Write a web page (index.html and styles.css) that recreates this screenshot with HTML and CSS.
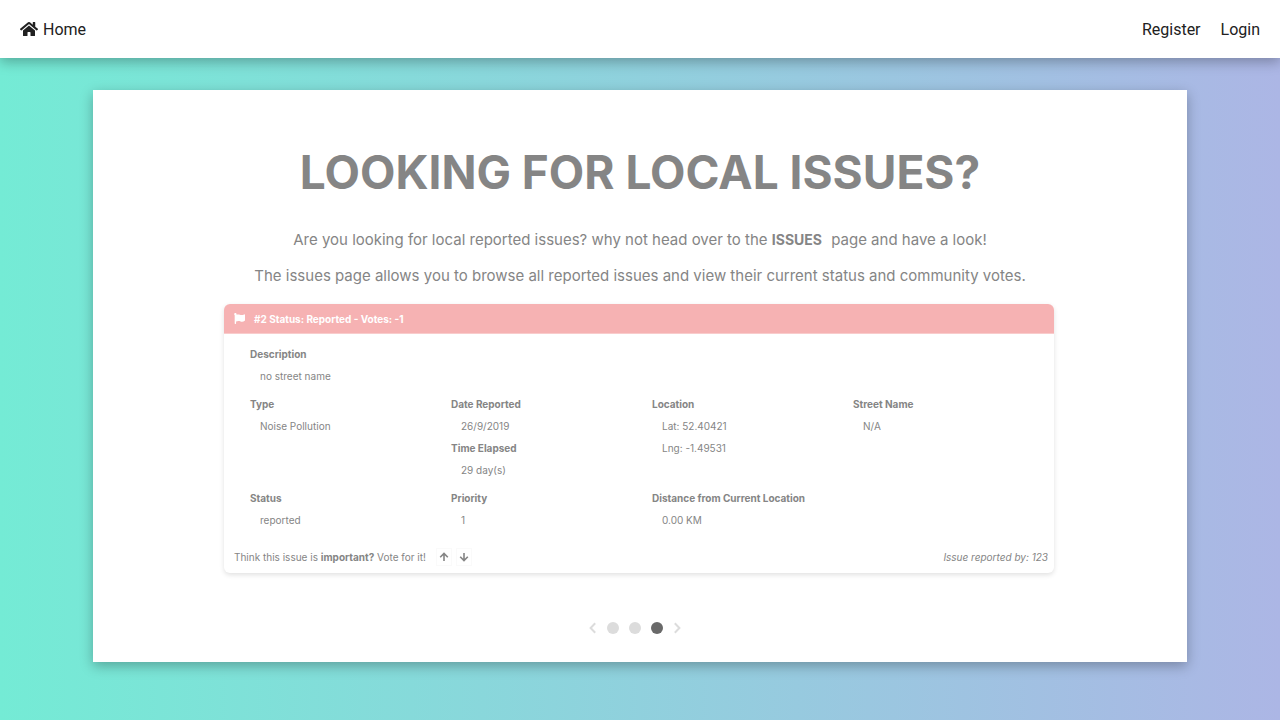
FILE: index.html
```html
<!DOCTYPE html>
<html lang="en">
<head>
<meta charset="utf-8">
<title>Local Issues</title>
<link rel="stylesheet" href="styles.css">
</head>
<body>
<nav class="navbar">
  <a class="nav-link" href="#">
    <svg class="home-icon" viewBox="0 0 576 512" aria-hidden="true"><path d="M280.37 148.26L96 300.11V464a16 16 0 0 0 16 16l112.06-.29a16 16 0 0 0 15.92-16V368a16 16 0 0 1 16-16h64a16 16 0 0 1 16 16v95.64a16 16 0 0 0 16 16.05L464 480a16 16 0 0 0 16-16V300L295.67 148.26a12.19 12.19 0 0 0-15.3 0zM571.6 251.47L488 182.56V44.05a12 12 0 0 0-12-12h-56a12 12 0 0 0-12 12v72.61L318.47 43a48 48 0 0 0-61 0L4.34 251.47a12 12 0 0 0-1.6 16.9l25.5 31A12 12 0 0 0 45.15 301l235.22-193.74a12.19 12.19 0 0 1 15.3 0L530.9 301a12 12 0 0 0 16.9-1.6l25.5-31a12 12 0 0 0-1.7-16.93z"/></svg>
    Home
  </a>
  <div class="nav-right">
    <a class="nav-link" href="#">Register</a>
    <a class="nav-link" href="#">Login</a>
  </div>
</nav>
<main class="panel">
  <h1 class="title">LOOKING FOR LOCAL ISSUES?</h1>
  <p class="lead">Are you looking for local reported issues? why not head over to the <a class="issues-link" href="#">ISSUES</a> page and have a look!</p>
  <p class="lead">The issues page allows you to browse all reported issues and view their current status and community votes.</p>
  <article class="card">
    <header class="card-header">
      <svg class="flag-icon" viewBox="0 0 512 512" aria-hidden="true"><path d="M349.565 98.783C295.978 98.783 251.721 64 184.348 64c-24.955 0-47.309 4.384-68.045 12.013a55.947 55.947 0 0 0 3.586-23.562C118.117 24.015 94.806 1.206 66.338.048 34.345-1.254 8 24.296 8 56c0 19.026 9.497 35.825 24 45.945V488c0 13.255 10.745 24 24 24h16c13.255 0 24-10.745 24-24v-94.4c28.311-12.064 63.582-22.122 114.435-22.122 53.588 0 97.844 34.783 165.217 34.783 48.169 0 86.667-16.294 122.505-40.858C506.84 359.452 512 349.571 512 339.045v-243.1c0-23.393-24.269-38.87-45.485-29.016-34.338 15.948-76.454 31.854-116.95 31.854z"/></svg>
      <span>#2 Status: Reported - Votes: -1</span>
    </header>
    <div class="card-body">
      <dl class="field wide"><dt>Description</dt><dd>no street name</dd></dl>
      <dl class="field"><dt>Type</dt><dd>Noise Pollution</dd></dl>
      <dl class="field"><dt>Date Reported</dt><dd>26/9/2019</dd><dt>Time Elapsed</dt><dd>29 day(s)</dd></dl>
      <dl class="field"><dt>Location</dt><dd>Lat: 52.40421</dd><dd>Lng: -1.49531</dd></dl>
      <dl class="field"><dt>Street Name</dt><dd>N/A</dd></dl>
      <dl class="field"><dt>Status</dt><dd>reported</dd></dl>
      <dl class="field"><dt>Priority</dt><dd>1</dd></dl>
      <dl class="field"><dt>Distance from Current Location</dt><dd>0.00 KM</dd></dl>
    </div>
    <footer class="card-footer">
      <span>Think this issue is <b>important?</b> Vote for it!</span>
      <div class="votes">
        <button class="vote" type="button" aria-label="Vote up"><svg class="arrow" viewBox="0 0 10 10"><path d="M5 9V1.5M1.2 5.2L5 1.4l3.8 3.8"/></svg></button>
        <button class="vote" type="button" aria-label="Vote down"><svg class="arrow" viewBox="0 0 10 10"><path d="M5 1v7.5M1.2 4.8L5 8.6l3.8-3.8"/></svg></button>
      </div>
      <em class="reporter">Issue reported by: 123</em>
    </footer>
  </article>
  <div class="pager">
    <button class="step" type="button" aria-label="Previous"><svg class="chevron" viewBox="0 0 8 12"><path d="M6.2 1.2L1.6 6l4.6 4.8"/></svg></button>
    <button class="dot" type="button" aria-label="Slide 1"></button>
    <button class="dot" type="button" aria-label="Slide 2"></button>
    <button class="dot active" type="button" aria-label="Slide 3"></button>
    <button class="step" type="button" aria-label="Next"><svg class="chevron" viewBox="0 0 8 12"><path d="M1.8 1.2L6.4 6l-4.6 4.8"/></svg></button>
  </div>
</main>
</body>
</html>
```

FILE: styles.css
```css
* { box-sizing: border-box; }
body {
  margin: 0;
  min-height: 100vh;
  background: linear-gradient(to right, #74ebd5, #acb6e5);
  font-family: Inter, sans-serif;
  font-size: 15px;
  color: #858585;
}
button { border: 0; padding: 0; background: none; color: inherit; cursor: pointer; }
.navbar {
  display: flex;
  justify-content: space-between;
  align-items: center;
  height: 58px;
  padding: 0 20px;
  background: #fff;
  box-shadow: 0 4px 12px rgba(0, 0, 0, .28);
}
.nav-right { display: flex; gap: 20px; }
.nav-link {
  display: flex;
  align-items: center;
  gap: 5px;
  font-family: Roboto, sans-serif;
  font-size: 16px;
  color: #212121;
  text-decoration: none;
}
.home-icon { width: 18px; height: 16px; fill: currentColor; }
.panel {
  display: flex;
  flex-direction: column;
  align-items: center;
  margin: 32px 93px 58px;
  padding: 52px 32px 28px;
  background: #fff;
  box-shadow: 0 4px 12px rgba(0, 0, 0, .28);
}
.title { margin: 0 0 27px; font-size: 46px; line-height: 60px; font-weight: 700; }
.lead { margin: 0 0 14px; line-height: 22px; }
.issues-link {
  margin-right: 5px;
  font-size: 14px;
  font-weight: 700;
  color: inherit;
  text-decoration: none;
}
.card {
  width: 100%;
  max-width: 830px;
  margin: 3px 2px 0 0;
  border-radius: 6px;
  overflow: hidden;
  font-size: 10px;
  line-height: 22px;
  box-shadow: 0 2px 5px rgba(0, 0, 0, .12);
}
.card-header {
  display: flex;
  align-items: center;
  gap: 9px;
  height: 30px;
  padding: 0 10px;
  border-bottom: 1px solid #f9cccc;
  background: #f6b2b3;
  color: #fff;
  font-weight: 700;
}
.flag-icon { width: 11px; height: 11px; fill: currentColor; }
.card-body {
  display: grid;
  grid-template-columns: repeat(4, 1fr);
  row-gap: 6px;
  padding: 9px 0 0 26px;
}
.wide { grid-column: 1 / -1; }
.field { margin: 0; }
.field dt { font-weight: 700; }
.field dd { margin: 0 0 0 10px; }
.card-footer { display: flex; align-items: center; padding: 15px 6px 5px 10px; }
.votes { display: flex; gap: 4px; margin-left: 10px; }
.vote {
  display: flex;
  align-items: center;
  justify-content: center;
  width: 16px;
  height: 18px;
  border: 1px solid #fafafa;
}
.arrow { width: 10px; height: 10px; fill: none; stroke: currentColor; stroke-width: 1.6; }
.reporter { margin-left: auto; }
.pager { display: flex; align-items: center; gap: 10px; margin: 49px 11px 0 0; }
.step { display: flex; color: #dcdcdc; }
.chevron { width: 8px; height: 12px; fill: none; stroke: currentColor; stroke-width: 2; }
.dot { width: 12px; height: 12px; border-radius: 50%; background: #dcdcdc; }
.dot.active { background: #696969; }
```
